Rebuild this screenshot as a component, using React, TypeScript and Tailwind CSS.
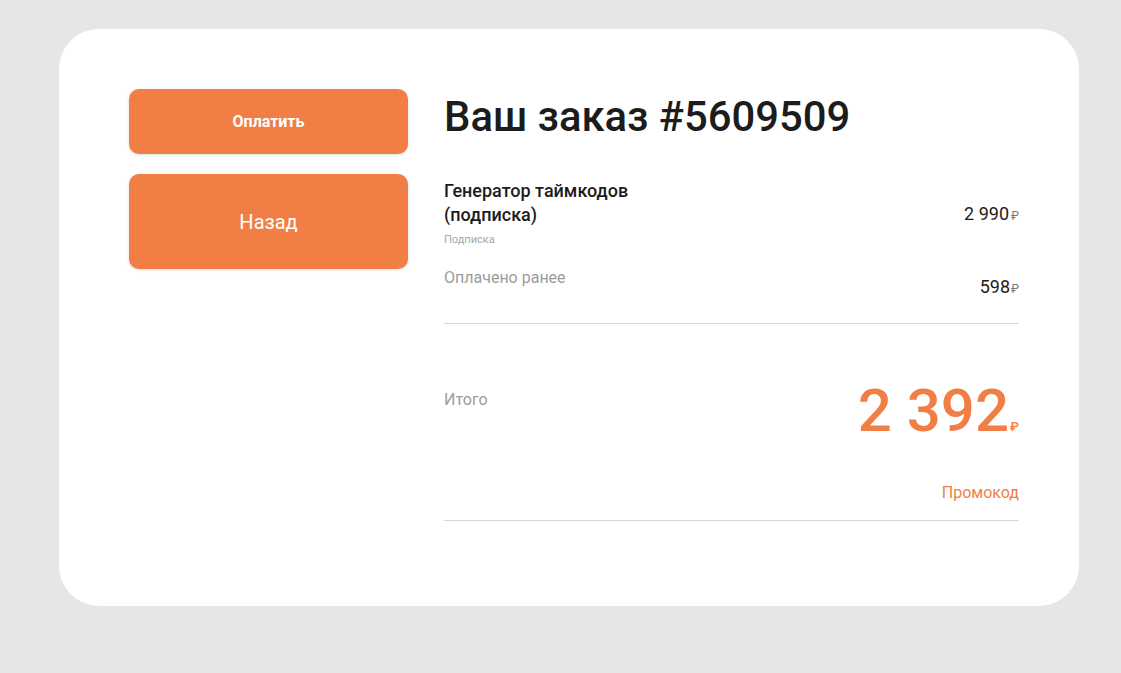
import React from "react";

const Rub = ({ className }: { className?: string }) => (
  <span className={className}>₽</span>
);

const App = () => {
  return (
    <div className="min-h-[673px] w-full bg-[#e6e6e6] pt-[29px] px-[59px] font-['Roboto',sans-serif]">
      <div className="w-[1020px] h-[577px] bg-white rounded-[40px] pt-[60px] pl-[70px] pr-[60px] flex gap-[36px]">
        {/* buttons */}
        <div className="w-[279px] flex flex-col gap-[20px]">
          <button
            type="button"
            className="h-[65px] w-full rounded-[10px] bg-[#f17f45] text-white text-[16px] font-bold shadow-[0_1px_3px_rgba(0,0,0,0.15)]"
          >
            Оплатить
          </button>
          <button
            type="button"
            className="h-[95px] w-full rounded-[10px] bg-[#f17f45] text-white text-[20px] shadow-[0_1px_3px_rgba(0,0,0,0.15)]"
          >
            Назад
          </button>
        </div>

        {/* order */}
        <div className="flex-1">
          <h1 className="text-[41.8px] leading-[50px] font-medium text-[#1c1c1c] mt-[3px]">
            Ваш заказ #5609509
          </h1>

          <div className="mt-[37px] flex items-center justify-between">
            <div>
              <div className="text-[18px] leading-[24px] font-medium text-[#1c1c1c]">
                Генератор таймкодов
                <br />
                (подписка)
              </div>
              <div className="text-[11px] leading-[16px] text-[#a6a6a6] mt-[5px]">
                Подписка
              </div>
            </div>
            <div className="text-[18px] text-[#1c1c1c] flex items-baseline">
              2 990
              <Rub className="text-[12px] text-[#777] ml-[2px]" />
            </div>
          </div>

          <div className="mt-[18px] flex justify-between">
            <div className="text-[16px] leading-[24px] text-[#9c9c9c]">
              Оплачено ранее
            </div>
            <div className="text-[18px] text-[#1c1c1c] flex items-baseline mt-[7px] mb-[1px]">
              598
              <Rub className="text-[12px] text-[#777] ml-[1px]" />
            </div>
          </div>

          <div className="mt-[22px] h-px bg-[#d8d8d8]" />

          <div className="mt-[55px] flex justify-between">
            <div className="text-[16px] leading-[24px] text-[#9c9c9c] mt-[9px]">
              Итого
            </div>
            <div className="flex items-baseline text-[#f17f45] font-medium">
              <span className="text-[60px] leading-[64px]">2 392</span>
              <Rub className="text-[13px] ml-[1px]" />
            </div>
          </div>

          <div className="mt-[38px] flex justify-end">
            <span className="text-[16px] leading-[24px] text-[#f17f45]">
              Промокод
            </span>
          </div>

          <div className="mt-[15px] h-px bg-[#d8d8d8]" />
        </div>
      </div>
    </div>
  );
};

export default App;
